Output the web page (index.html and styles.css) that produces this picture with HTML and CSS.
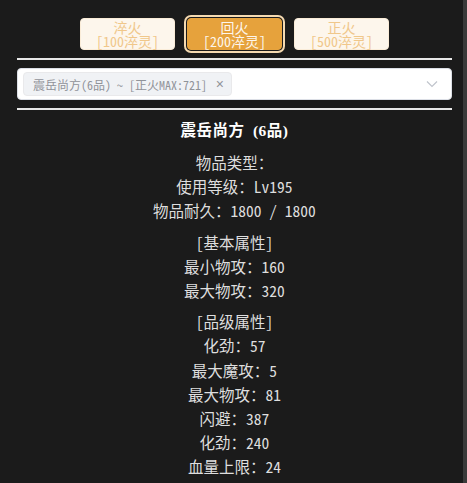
FILE: index.html
```html
<!DOCTYPE html>
<html lang="zh">
<head>
<meta charset="utf-8">
<title>淬火</title>
<link rel="stylesheet" href="styles.css">
</head>
<body>
<div class="page">
  <div class="btns">
    <button class="btn">淬火<br>[100淬灵]</button>
    <button class="btn active">回火<br>[200淬灵]</button>
    <button class="btn">正火<br>[500淬灵]</button>
  </div>
  <div class="rule"></div>
  <div class="select">
    <span class="tag">震岳尚方(6品) ~ [正火MAX:721]<span class="close">×</span></span>
    <svg class="chev" width="12" height="8" viewBox="0 0 12 8"><path d="M1 1.5 L6 6.5 L11 1.5" fill="none" stroke="#c0c4cc" stroke-width="1.2"/></svg>
  </div>
  <div class="rule"></div>
  <div class="info">
    <div class="title">震岳尚方 (6品)</div>
    <div class="group">
      <div class="row">物品类型：</div>
      <div class="row">使用等级：Lv195</div>
      <div class="row">物品耐久：1800 / 1800</div>
    </div>
    <div class="group">
      <div class="row">[基本属性]</div>
      <div class="row">最小物攻：160</div>
      <div class="row">最大物攻：320</div>
    </div>
    <div class="group">
      <div class="row">[品级属性]</div>
      <div class="row">化劲：57</div>
      <div class="row">最大魔攻：5</div>
      <div class="row">最大物攻：81</div>
      <div class="row">闪避：387</div>
      <div class="row">化劲：240</div>
      <div class="row">血量上限：24</div>
    </div>
  </div>
</div>
</body>
</html>
```
FILE: styles.css
```css
html {
  background: #1b1b1b;
  box-shadow: inset -4px 0 0 #3a3a3a;
  min-height: 100%;
}
body {
  margin: 0;
  font-family: "Noto Sans CJK SC", "Liberation Serif", serif;
  font-feature-settings: "hwid";
  color: #dedede;
}
.page {
  padding: 18px 15px 0 17px;
  width: 435px;
}
.btns {
  display: flex;
  justify-content: center;
  gap: 12px;
}
.btn {
  width: 95px;
  height: 32px;
  padding: 0;
  border: 1px solid #faecd8;
  border-radius: 4px;
  background: #fdf6ec;
  color: #f0c78a;
  font-family: "Noto Sans CJK SC", "Liberation Serif", serif;
  font-feature-settings: "hwid";
  font-size: 14px;
  line-height: 14px;
}
.btn.active {
  background: #e6a23c;
  border-color: #e6a23c;
  color: #fdf6ec;
  box-shadow: 0 0 0 1px #1b1b1b, 0 0 0 3px #f5dab1;
}
.rule {
  height: 2px;
  background: #e8e8e8;
  margin-top: 8px;
}
.select {
  margin-top: 8px;
  height: 32px;
  box-sizing: border-box;
  background: #fff;
  border: 1px solid #dcdfe6;
  border-radius: 4px;
  display: flex;
  align-items: center;
  padding: 0 13px 0 5px;
}
.tag {
  height: 24px;
  box-sizing: border-box;
  background: #f0f2f5;
  border: 1px solid #e9e9eb;
  border-radius: 4px;
  color: #909399;
  font-size: 12px;
  display: flex;
  align-items: center;
  padding: 0 7px 0 9px;
  width: 209px;
}
.close {
  margin-left: auto;
  font-family: "Liberation Sans", sans-serif;
  font-size: 14px;
  color: #909399;
}
.chev {
  margin-left: auto;
}
.info {
  padding-top: 9px;
  text-align: center;
  font-size: 15.5px;
}
.title {
  color: #ffffff;
  font-family: "Liberation Serif", "Noto Sans CJK SC", serif;
  font-weight: bold;
  word-spacing: 4px;
  letter-spacing: 0.5px;
  line-height: 24px;
  margin-bottom: 7px;
}
.row {
  line-height: 24.2px;
}
.group + .group {
  margin-top: 7px;
}
```
